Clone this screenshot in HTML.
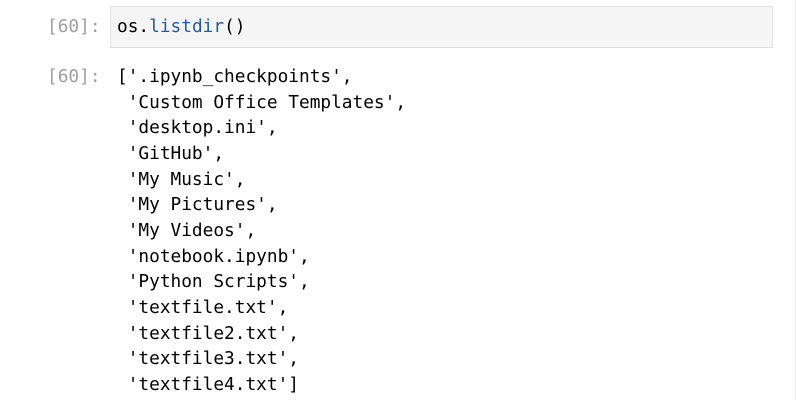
<!DOCTYPE html>
<html><head><style>
html,body{margin:0;padding:0;background:#fff;width:796px;height:400px;overflow:hidden}
.m{font-family:"DejaVu Sans Mono","Liberation Mono",monospace;font-size:17.8px;}
.p{position:absolute;left:47px;color:#a0a0a0;}
.box{position:absolute;left:110px;top:6px;width:661px;height:40px;background:#f5f5f5;border:1px solid #e0e0e0;}
.in{position:absolute;left:117px;top:14px;line-height:25px;color:#000;white-space:pre}
.out{position:absolute;left:117px;top:64px;line-height:25.67px;color:#000;white-space:pre;margin:0}
.vl{position:absolute;left:795px;top:0;width:1px;height:400px;background:#eee}
</style></head><body>
<div class="vl"></div>
<div class="m p" style="top:14px;line-height:25px">[60]:</div>
<div class="box"></div>
<div class="m in">os.<span style="color:#1f5aa8">listdir</span>()</div>
<div class="m p" style="top:64px;line-height:25.67px">[60]:</div>
<pre class="m out">['.ipynb_checkpoints',
 'Custom Office Templates',
 'desktop.ini',
 'GitHub',
 'My Music',
 'My Pictures',
 'My Videos',
 'notebook.ipynb',
 'Python Scripts',
 'textfile.txt',
 'textfile2.txt',
 'textfile3.txt',
 'textfile4.txt']</pre>
</body></html>
